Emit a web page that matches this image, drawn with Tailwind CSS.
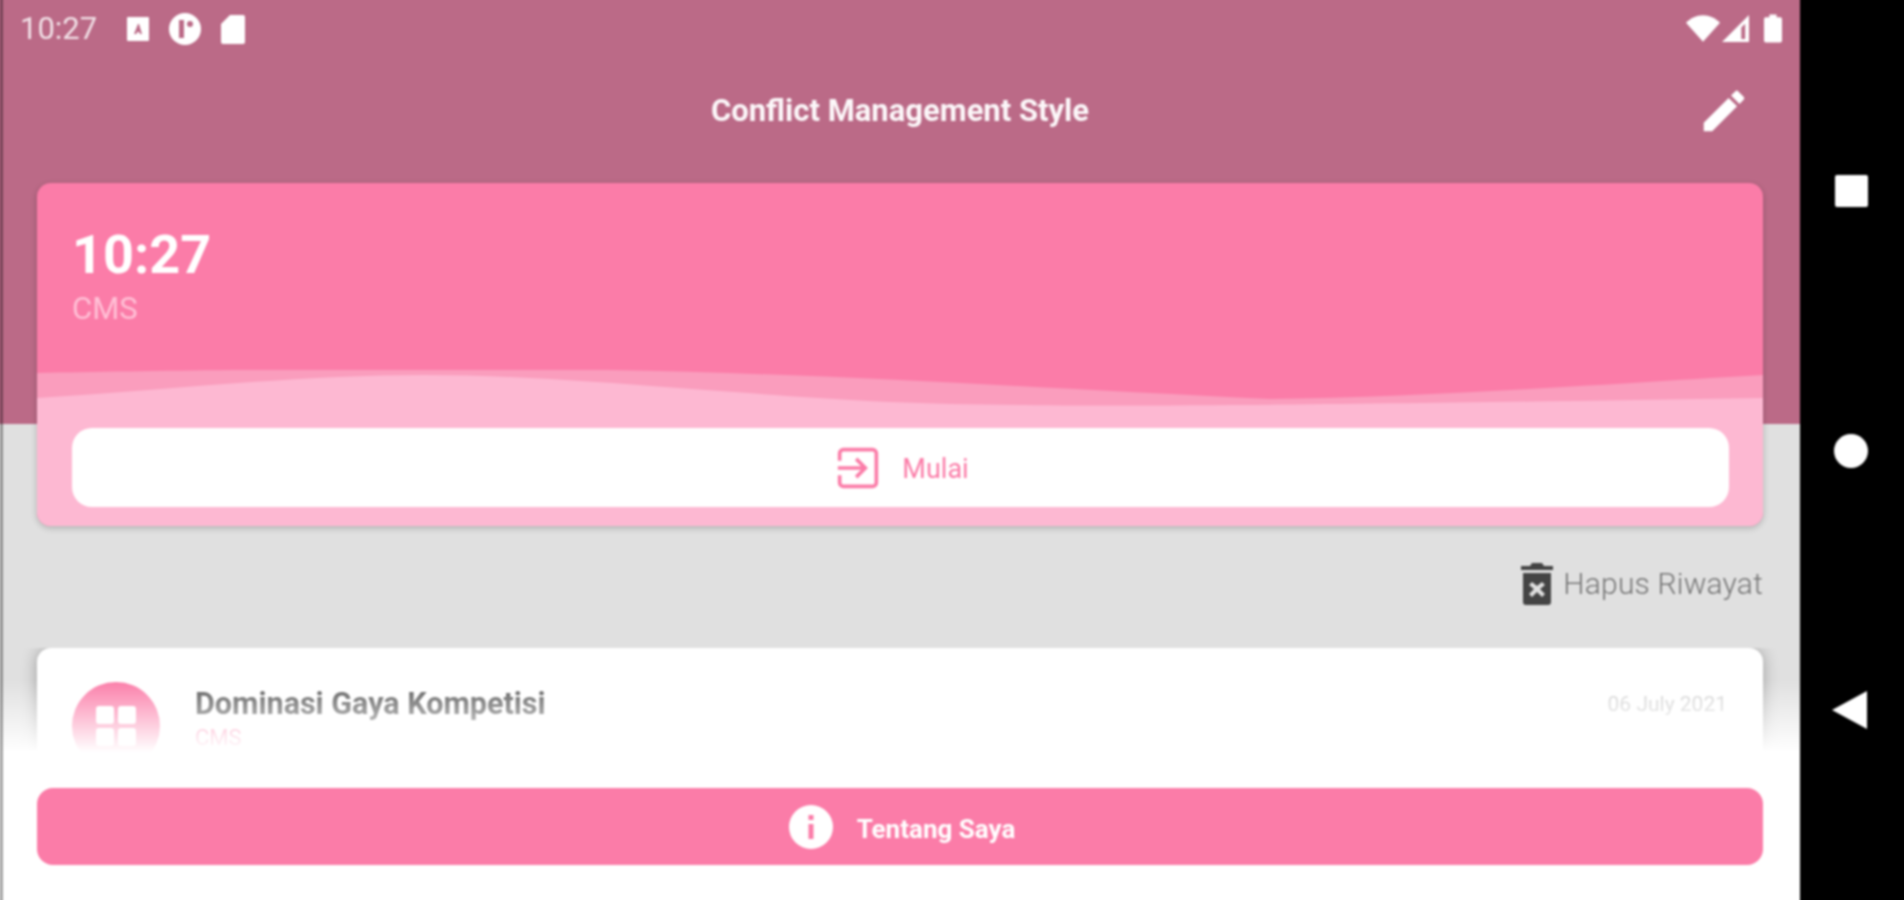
<!DOCTYPE html>
<html lang="en">
  <head>
    <meta charset="utf-8" />
    <title>Conflict Management Style</title>
    <script src="https://cdn.jsdelivr.net/npm/@tailwindcss/browser@4"></script>
  </head>
  <body class="bg-black overflow-hidden font-['Roboto',sans-serif]">
    <!-- 4px bleed on each side so the soft edge stays off the page -->
    <div class="flex w-[1912px] h-[908px] -mt-[4px] -ml-[4px] blur-[0.8px]">
      <!-- App screen -->
      <main class="relative w-[1804px] h-[908px] pt-[4px] pl-[4px] bg-[#e0e0e0] flex flex-col overflow-hidden">
        <div class="absolute inset-x-0 top-0 h-[428px] bg-[#bb6a87]"></div>

        <!-- Status bar -->
        <div class="relative h-[57px] flex items-center justify-between pl-[20px] pr-[18px] text-white">
          <div class="flex items-center">
            <span class="text-[31px] leading-none text-white/80 w-[106px]">10:27</span>
            <svg class="w-[24px] h-[26px]" viewBox="0 0 24 26">
              <path fill="#fff" fill-rule="evenodd" d="M2 1h20a1 1 0 0 1 1 1v22a1 1 0 0 1-1 1H2a1 1 0 0 1-1-1V2a1 1 0 0 1 1-1zM12 8l-4 10h2.500l.7-2h2l.7 2H16L13 8z" />
            </svg>
            <svg class="w-[34px] h-[34px] ml-[18px]" viewBox="0 0 34 34">
              <circle cx="17" cy="17" r="16" fill="#fff" />
              <rect x="11" y="8" width="5" height="18" fill="#bb6a87" />
              <circle cx="22" cy="12" r="3" fill="#bb6a87" />
            </svg>
            <svg class="w-[26px] h-[30px] ml-[18px]" viewBox="0 0 26 30">
              <path fill="#fff" d="M10 1h13a2 2 0 0 1 2 2v25a2 2 0 0 1-2 2H3a2 2 0 0 1-2-2V10z" />
            </svg>
          </div>
          <div class="flex items-center">
            <svg class="w-[34px] h-[27px]" viewBox="0 0 36 28">
              <path fill="#fff" d="M18 28L0 8C5 3 11 0 18 0s13 3 18 8z" />
            </svg>
            <svg class="w-[28px] h-[27px] ml-[2px]" viewBox="0 0 29 28">
              <path fill="#fff" fill-rule="evenodd" d="M0 28L28 0v28zM20 13v12h4V9z" />
            </svg>
            <svg class="w-[18px] h-[29px] ml-[14px]" viewBox="0 0 20 31">
              <path fill="#fff" d="M6 0h8v3h4a2 2 0 0 1 2 2v24a2 2 0 0 1-2 2H2a2 2 0 0 1-2-2V5a2 2 0 0 1 2-2h4z" />
            </svg>
          </div>
        </div>

        <!-- Toolbar -->
        <header class="relative h-[71px] flex items-start justify-center">
          <h1 class="text-[31px] leading-none font-bold text-white/95 mt-[38px]">Conflict Management Style</h1>
          <button class="absolute right-[52px] top-[30px] w-[48px] h-[48px] flex items-center justify-center">
            <svg class="w-[54px] h-[54px] shrink-0" viewBox="0 0 24 24" fill="#fff">
              <path d="M3 17.25V21h3.75L17.81 9.94l-3.75-3.75L3 17.25zM20.71 7.04a1 1 0 0 0 0-1.41l-2.34-2.34a1 1 0 0 0-1.41 0l-1.83 1.83 3.75 3.75 1.83-1.83z" />
            </svg>
          </button>
        </header>

        <!-- Clock card -->
        <section class="relative mx-[37px] h-[343px] mt-[55px] rounded-[14px] overflow-hidden bg-[#fb7ca8] shadow-[0_2px_6px_rgba(0,0,0,0.22)] shrink-0">
          <div class="relative px-[35px] pt-[42px]">
            <div class="text-[54px] leading-[60px] font-bold text-white">10:27</div>
            <div class="text-[31px] leading-[36px] mt-[6px] text-[#ffc0d6]">CMS</div>
          </div>
          <svg class="absolute left-0 top-[187px] w-[1726px] h-[156px]" viewBox="0 0 1726 156" preserveAspectRatio="none">
            <path fill="#fa9dbd" d="M0 3C150 0 400-3 570 0C800 4 1000 18 1233 29C1400 27 1600 12 1726 5V156H0z" />
            <path fill="#fdb8d2" d="M0 28C130 20 260 5 387 5C520 5 660 22 853 32C1000 38 1233 36 1726 28V156H0z" />
          </svg>
          <button class="absolute left-[35px] right-[34px] top-[245px] h-[79px] bg-white rounded-[20px] flex items-center justify-center">
            <svg class="w-[44px] h-[44px] ml-[4px] mr-[22px]" viewBox="0 0 24 24" fill="none" stroke="#fb7ca8" stroke-width="2">
              <path d="M2 8V4a2 2 0 0 1 2-2h16a2 2 0 0 1 2 2v16a2 2 0 0 1-2 2H4a2 2 0 0 1-2-2v-4" />
              <path d="M1 12h15M11 7l5 5-5 5" />
            </svg>
            <span class="text-[27px] leading-none text-[#fb7ca8] translate-y-[2px]">Mulai</span>
          </button>
        </section>

        <!-- Clear history -->
        <div class="relative mt-[35px] mr-[37px] h-[46px] flex items-center justify-end shrink-0">
          <svg class="w-[34px] h-[44px] mr-[9px]" viewBox="0 0 34 44">
            <path fill="#444" fill-rule="evenodd" d="M12 1h10l2 3h9v4H1V4h9zM3 11h28v29a3 3 0 0 1-3 3H6a3 3 0 0 1-3-3zM12 20l-3 3 5 4-5 5 3 3 5-5 5 5 3-3-5-5 5-4-3-3-5 4z" />
          </svg>
          <span class="text-[30px] leading-none font-light text-[#757575] tracking-[0.2px]">Hapus Riwayat</span>
        </div>

        <!-- History list, runs under the footer -->
        <div class="relative flex-1 mt-[41px] px-[37px] overflow-hidden">
          <article class="h-[150px] bg-white rounded-[14px] shadow-[0_0_16px_rgba(0,0,0,0.3)] flex pl-[35px] pr-[36px] pt-[34px]">
            <div class="w-[88px] h-[88px] rounded-full bg-[#fb7ca8] grid grid-cols-2 gap-[4px] p-[24px] shrink-0">
              <span class="bg-white rounded-[3px]"></span>
              <span class="bg-white rounded-[3px]"></span>
              <span class="bg-white rounded-[3px]"></span>
              <span class="bg-white rounded-[3px]"></span>
            </div>
            <div class="ml-[35px] flex-1">
              <div class="text-[30.500px] leading-[36px] mt-[4px] font-bold text-[#555]">Dominasi Gaya Kompetisi</div>
              <div class="text-[22px] leading-[28px] mt-[2px] text-[#fb7ca8]">CMS</div>
            </div>
            <div class="text-[21px] leading-[36px] mt-[4px] text-[#d0d0d0]">06 July 2021</div>
          </article>
          <div class="absolute inset-x-0 bottom-0 h-[80px] bg-gradient-to-b from-white/0 to-white to-90%"></div>
        </div>

        <!-- Footer -->
        <footer class="relative h-[144px] bg-white px-[37px] pt-[28px] pb-[4px] shrink-0">
          <button class="w-full h-[77px] bg-[#fb7ca8] rounded-[16px] flex items-center justify-center">
            <svg class="w-[44px] h-[44px] ml-[4px] mr-[24px]" viewBox="0 0 44 44">
              <circle cx="22" cy="22" r="22" fill="#fff" />
              <rect x="19.500" y="10" width="5" height="5" fill="#fb7ca8" />
              <rect x="19.500" y="19" width="5" height="15" fill="#fb7ca8" />
            </svg>
            <span class="text-[26px] leading-none font-bold text-white translate-y-[2px]">Tentang Saya</span>
          </button>
        </footer>

        <div class="absolute left-[4px] inset-y-0 w-[3px] bg-black/35"></div>
      </main>

      <!-- Android nav bar -->
      <nav class="flex-1 bg-black flex flex-col items-center pt-[179px] pr-[6px]">
        <span class="w-[33px] h-[32px] bg-white rounded-[2px]"></span>
        <span class="w-[34px] h-[34px] bg-white rounded-full mt-[227px]"></span>
        <svg class="w-[36px] h-[38px] mt-[223px] ml-[-2px]" viewBox="0 0 36 38">
          <path fill="#fff" d="M35 0v38L0 19z" />
        </svg>
      </nav>
    </div>
  </body>
</html>
